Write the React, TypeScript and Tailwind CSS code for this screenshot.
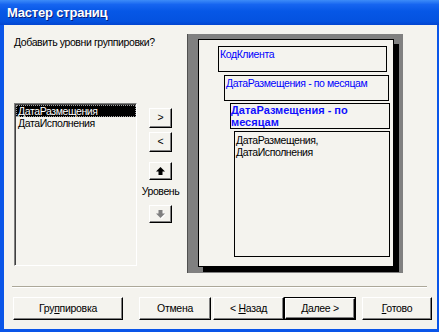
import React from "react";

const font = { fontFamily: '"Liberation Sans", Arial, sans-serif' };

function ClassicBtn({
  className = "",
  children,
  def = false,
}: {
  className?: string;
  children: React.ReactNode;
  def?: boolean;
}) {
  if (def) {
    return (
      <div className={`border border-black ${className}`}>
        <div className="w-full h-full border-t border-l border-white border-r border-b border-r-black border-b-black shadow-[inset_-1px_-1px_0_#808080] flex items-center justify-center text-[10.5px] tracking-[-0.3px] text-black">
          {children}
        </div>
      </div>
    );
  }
  return (
    <div
      className={`border-t border-l border-white border-r border-b border-r-black border-b-black shadow-[inset_-1px_-1px_0_#808080] flex items-center justify-center text-[10.5px] tracking-[-0.3px] text-black ${className}`}
    >
      {children}
    </div>
  );
}

export default function App() {
  return (
    <div
      className="w-[439px] h-[332px] bg-[#0a55e8] flex flex-col overflow-hidden"
      style={font}
    >
      {/* Title bar */}
      <div className="h-[25px] shrink-0 bg-[linear-gradient(to_bottom,#3d8cf8_0%,#1665f0_18%,#0657e6_45%,#0452e0_85%,#0345d0_100%)] flex items-center pl-[7px]">
        <span className="text-white font-bold text-[13px] tracking-[-0.2px] [text-shadow:1px_1px_0_#0a1e7a]">
          Мастер страниц
        </span>
      </div>

      {/* Client area */}
      <div className="ml-[4px] mr-[2px] mb-[3px] flex-1 bg-[#f4f3ee] flex flex-col">
        {/* main row */}
        <div className="flex mt-[9px]">
          {/* left column */}
          <div className="ml-[10px] w-[173px] flex flex-col">
            <div className="mt-[2px] h-[13px] leading-[13px] text-[10.5px] tracking-[-0.4px] text-black">
              Добавить уровни группировки?
            </div>
            <div className="flex mt-[54px]">
              {/* listbox */}
              <div className="w-[123px] h-[163px] border-t border-l border-[#808080] border-r border-b border-r-white border-b-white shadow-[inset_1px_1px_0_#404040] bg-[#f4f3ee] pt-[1px] pl-[1px] flex flex-col text-[10.5px] tracking-[-0.4px]">
                <div className="h-[12px] w-[120px] bg-black text-white leading-[10px] pl-[1px] border border-dotted border-[#a0a0a0]">
                  ДатаРазмещения
                </div>
                <div className="h-[12px] w-[120px] text-black leading-[12px] pl-[2px]">
                  ДатаИсполнения
                </div>
              </div>
              {/* buttons column */}
              <div className="ml-[12px] w-[23px] flex flex-col items-center">
                <ClassicBtn className="mt-[5px] w-[23px] h-[20px]">&gt;</ClassicBtn>
                <ClassicBtn className="mt-[4px] w-[23px] h-[20px]">&lt;</ClassicBtn>
                <ClassicBtn className="mt-[10px] w-[23px] h-[18px]">
                  <svg width="9" height="8" viewBox="0 0 9 8">
                    <polygon points="4.5,0 9,4.5 0,4.5" fill="#000" />
                    <rect x="2.5" y="4" width="4" height="4" fill="#000" />
                  </svg>
                </ClassicBtn>
                <div className="mt-[5px] h-[13px] leading-[13px] text-[10.5px] tracking-[-0.4px] text-black whitespace-nowrap">
                  Уровень
                </div>
                <ClassicBtn className="mt-[7px] w-[23px] h-[18px]">
                  <svg width="10" height="9" viewBox="0 0 10 9">
                    <rect x="3.5" y="1" width="4" height="4" fill="#fff" />
                    <polygon points="5.5,9 10,4.5 1,4.5" fill="#fff" />
                    <rect x="2.5" y="0" width="4" height="4" fill="#808080" />
                    <polygon points="4.5,8 9,3.5 0,3.5" fill="#808080" />
                  </svg>
                </ClassicBtn>
              </div>
            </div>
          </div>

          {/* preview panel */}
          <div className="w-[216px] h-[239px] bg-[#808080] border-l border-[#505050] pl-[10px] pt-[5px]">
            <div className="w-[196px] h-[228px] border border-black bg-[#f4f3ee] shadow-[5px_5px_0_#000] flex flex-col text-[10.5px] tracking-[-0.4px]">
              <div className="ml-[19px] mt-[6px] w-[169px] h-[26px] border border-black text-[#0000ff] leading-[13px] pl-[1px] pt-[1px]">
                КодКлиента
              </div>
              <div className="ml-[25px] mt-[3px] w-[165px] h-[26px] border border-black text-[#0000ff] leading-[13px] pl-[1px] pt-[1px]">
                ДатаРазмещения - по месяцам
              </div>
              <div className="ml-[31px] mt-[2px] w-[160px] h-[26px] border border-black text-[#1010ff] font-bold text-[11px] tracking-[0px] leading-[12px] pl-[0px] pt-[0px]">
                ДатаРазмещения - по месяцам
              </div>
              <div className="ml-[35px] mt-[2px] w-[156px] h-[126px] border border-black text-black leading-[12px] pl-[1px] pt-[2px]">
                ДатаРазмещения,
                <br />
                ДатаИсполнения
              </div>
            </div>
          </div>
        </div>

        {/* separator */}
        <div className="ml-[8px] mt-[13px] w-[415px] border-t border-[#aca899] border-b border-b-white" />

        {/* bottom buttons */}
        <div className="flex mt-[9px]">
          <ClassicBtn className="ml-[9px] w-[110px] h-[23px]">
            <span>
              Гру<span className="underline">п</span>пировка
            </span>
          </ClassicBtn>
          <ClassicBtn className="ml-[16px] w-[72px] h-[23px]">Отмена</ClassicBtn>
          <ClassicBtn className="ml-[2px] w-[71px] h-[23px]">
            <span>
              &lt; <span className="underline">Н</span>азад
            </span>
          </ClassicBtn>
          <ClassicBtn def className="w-[72px] h-[23px]">
            <span>
              <span className="underline">Д</span>алее &gt;
            </span>
          </ClassicBtn>
          <ClassicBtn className="ml-[6px] w-[70px] h-[23px]">
            <span>
              <span className="underline">Г</span>отово
            </span>
          </ClassicBtn>
        </div>
      </div>
    </div>
  );
}
